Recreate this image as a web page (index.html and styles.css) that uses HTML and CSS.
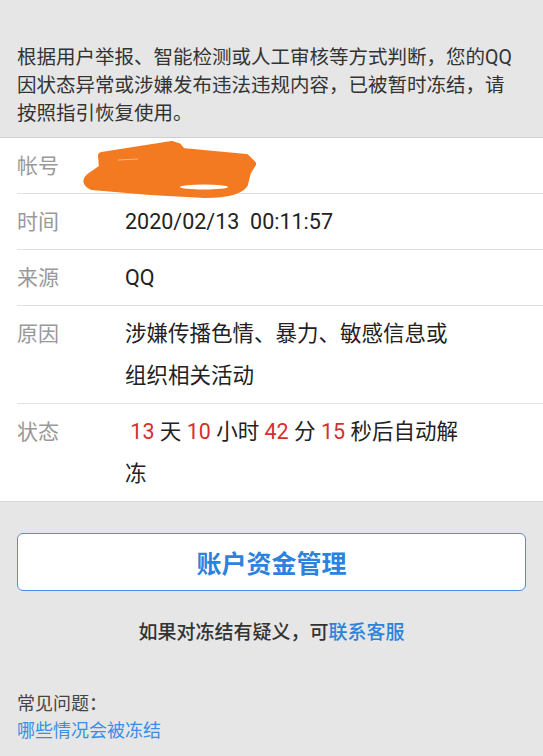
FILE: index.html
```html
<!DOCTYPE html>
<html lang="zh-CN">
<head>
    <meta charset="UTF-8">
    <meta name="viewport" content="width=device-width, initial-scale=1.0">
    <title>帐号冻结</title>
    <link rel="stylesheet" href="styles.css">
</head>
<body>
    <div class="notice">
        根据用户举报、智能检测或人工审核等方式判断，您的QQ因状态异常或涉嫌发布违法违规内容，已被暂时冻结，请按照指引恢复使用。
    </div>

    <!-- Freeze details -->
    <div class="details">
        <div class="row account-row">
            <span class="label">帐号</span>
            <span class="value"></span>
            <!-- redaction mark over the account number -->
            <svg class="scribble" viewBox="80 136 180 60" width="180" height="60">
                <path d="M102 154 L172 143 L178 145 L182 150 L246 156 L252 162 L247 170 L244 182 Q238 192 205 192 L150 189 L92 184 Q84 180 90 175 L103 166 Z"
                      fill="#f47a21" stroke="#f47a21" stroke-width="8" stroke-linejoin="round"/>
                <ellipse cx="204" cy="185" rx="24" ry="2.5" fill="#fff"/>
                <path d="M118 158 L138 157" stroke="#f6b88a" stroke-width="1"/>
            </svg>
        </div>
        <div class="row">
            <span class="label">时间</span>
            <span class="value">2020/02/13&nbsp;&nbsp;00:11:57</span>
        </div>
        <div class="row">
            <span class="label">来源</span>
            <span class="value">QQ</span>
        </div>
        <div class="row">
            <span class="label">原因</span>
            <span class="value">涉嫌传播色情、暴力、敏感信息或组织相关活动</span>
        </div>
        <div class="row">
            <span class="label">状态</span>
            <span class="value">&nbsp;<em>13</em>&nbsp;天&nbsp;<em>10</em>&nbsp;小时&nbsp;<em>42</em>&nbsp;分&nbsp;<em>15</em>&nbsp;秒后自动解冻</span>
        </div>
    </div>

    <div class="actions">
        <button class="btn">账户资金管理</button>
        <p class="contact">如果对冻结有疑义，可<a href="#">联系客服</a></p>
    </div>

    <div class="faq">
        <p>常见问题：</p>
        <a href="#">哪些情况会被冻结</a>
    </div>
</body>
</html>
```

FILE: styles.css
```css
body {
    margin: 0;
    padding: 0;
    background-color: #e6e6e6;
    font-family: Roboto, "Noto Sans CJK SC", sans-serif;
    color: #333;
}

.notice {
    padding: 44px 30px 9px 17px;
    font-size: 19.5px;
    line-height: 28px;
    color: #333;
    border-bottom: 1px solid #cfcfcf;
}

/* Details panel */
.details {
    background-color: #fff;
    padding-left: 17px;
    border-bottom: 1px solid #dadada;
}

.row {
    display: flex;
    align-items: flex-start;
    padding: 6.5px 0;
    border-bottom: 1px solid #e2e2e2;
}

.row:last-child {
    border-bottom: none;
}

.account-row {
    position: relative;
    height: 42px;
}

.label {
    display: block;
    width: 108px;
    flex-shrink: 0;
    font-size: 21px;
    line-height: 42px;
    color: #999;
}

.value {
    display: block;
    width: 338px;
    font-size: 21.5px;
    line-height: 42px;
    color: #222;
}

.value em {
    font-style: normal;
    color: #d32f2f;
}

.scribble {
    position: absolute;
    left: 63px;
    top: 0;
}

/* Bottom actions */
.actions {
    padding: 31px 17px 0 17px;
}

.btn {
    display: block;
    width: 100%;
    height: 58px;
    background-color: #fff;
    border: 1.5px solid #4a90e2;
    border-radius: 6px;
    font-family: inherit;
    font-size: 25px;
    font-weight: bold;
    color: #2d83dc;
}

.contact {
    margin: 28px 0 0 0;
    text-align: center;
    font-size: 19px;
    line-height: 28px;
    font-weight: 500;
    color: #333;
}

.contact a {
    color: #2d83dc;
    text-decoration: none;
}

.faq {
    padding: 43px 17px 0 17px;
    font-size: 18px;
    line-height: 27px;
}

.faq p {
    margin: 0;
    color: #444;
}

.faq a {
    color: #3a8ee6;
    text-decoration: none;
}
```
